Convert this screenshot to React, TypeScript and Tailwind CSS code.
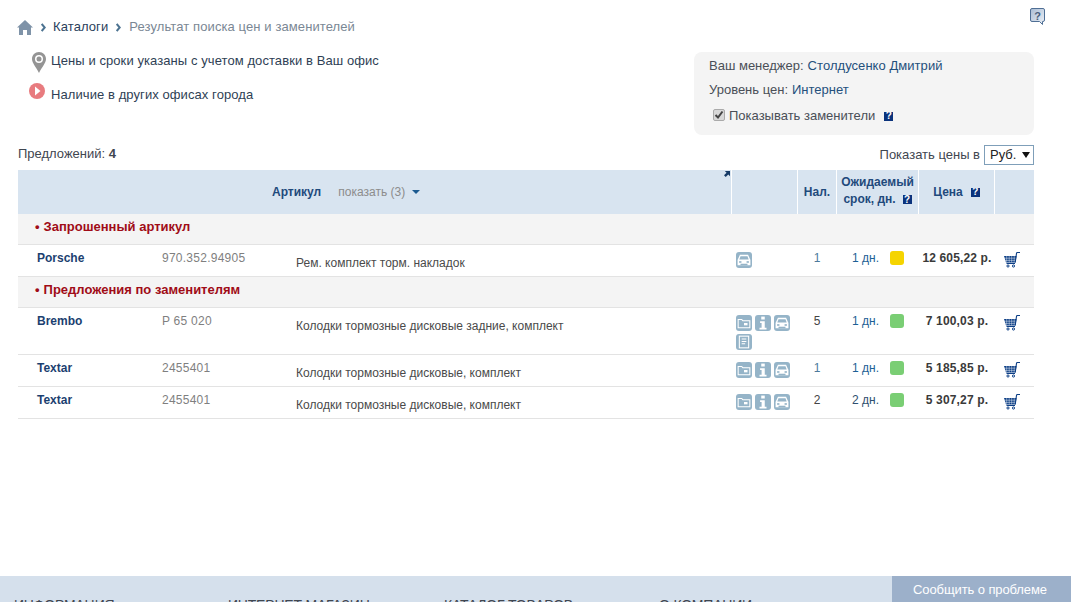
import React from 'react';

const rowCols = 'grid grid-cols-[144px_134px_436px_66px_38px_83px_75px_40px]';

const HelpBadge = () => (
  <span className="inline-flex h-[9px] w-[9px] items-center justify-center overflow-hidden bg-[#0b337c] text-[10px] leading-none font-bold text-white">?</span>
);

const HomeIcon = () => (
  <svg width="16" height="15" viewBox="0 0 16 15" fill="#7f93a8">
    <path d="M8 0 L16 7.5 L14 7.5 L14 15 L10 15 L10 10 L6 10 L6 15 L2 15 L2 7.5 L0 7.5 Z" />
  </svg>
);

const Chevron = () => (
  <svg width="5" height="9" viewBox="0 0 5 9" fill="none" stroke="#4d7391" strokeWidth="2">
    <path d="M.7 1 L3.7 4.5 L.7 8" />
  </svg>
);

const PinIcon = () => (
  <svg width="14" height="21" viewBox="0 0 14 21">
    <path d="M7 0 C3 0 0 3 0 7 C0 11 4 15 7 21 C10 15 14 11 14 7 C14 3 11 0 7 0 Z" fill="#949494" />
    <circle cx="7" cy="7" r="4" fill="#fff" />
    <circle cx="7" cy="7" r="2.5" fill="#949494" />
  </svg>
);

const PlayIcon = () => (
  <svg width="16" height="16" viewBox="0 0 16 16">
    <circle cx="8" cy="8" r="8" fill="#e87b7f" />
    <path d="M6 3.5 L11.5 8 L6 12.5 Z" fill="#fff" />
  </svg>
);

const QuestionBubble = () => (
  <svg width="15" height="17" viewBox="0 0 15 17">
    <defs>
      <linearGradient id="bubbleFill" x1="0" y1="0" x2="1" y2="1">
        <stop offset="0" stopColor="#a9bcd4" />
        <stop offset="1" stopColor="#eef2f7" />
      </linearGradient>
    </defs>
    <path d="M2 .5 H13 A1.5 1.5 0 0 1 14.5 2 V12 A1.5 1.5 0 0 1 13 13.5 H12.5 V16.5 L9.5 13.5 H2 A1.5 1.5 0 0 1 .5 12 V2 A1.5 1.5 0 0 1 2 .5 Z" fill="url(#bubbleFill)" stroke="#4f6f95" />
    <text x="7.5" y="11.5" fontSize="11" fontWeight="700" textAnchor="middle" fill="#4a5f7c" fontFamily="Liberation Sans">?</text>
  </svg>
);

const CartIcon = () => (
  <svg width="16" height="16" viewBox="0 0 16 16" fill="none">
    <path d="M0 4 H12.5 L11.5 10.5 H2 Z" fill="#0d3f86" />
    <path d="M0 6.2 H12 M0 8.4 H12 M2.7 4 V10.5 M5.2 4 V10.5 M7.7 4 V10.5 M10.2 4 V10.5" stroke="#fff" strokeWidth=".45" />
    <path d="M11.2 10.5 L12.5 1.5 L13 .5 H16" stroke="#0d3f86" strokeWidth="1.1" />
    <rect x="2.5" y="11" width="8.5" height="1" fill="#0d3f86" />
    <circle cx="4" cy="14" r="1.1" stroke="#0d3f86" strokeWidth="1" />
    <circle cx="9.5" cy="14" r="1.1" stroke="#0d3f86" strokeWidth="1" />
  </svg>
);

const IconTile = ({ children }: { children: React.ReactNode }) => (
  <span className="flex h-4 w-4 items-center justify-center rounded-[3px] bg-[#95b4c8]">
    <svg width="14" height="14" viewBox="0 0 12 12" fill="none">{children}</svg>
  </span>
);

const BoxTile = () => (
  <IconTile>
    <path d="M1 3 H4 L5 4 H11 V10 H1 Z" stroke="#fff" strokeWidth=".9" />
    <rect x="6" y="6" width="3" height="2" fill="#fff" />
  </IconTile>
);

const InfoTile = () => (
  <IconTile>
    <rect x="4.5" y="0.5" width="3" height="2.5" fill="#fff" />
    <path d="M3.5 4.5 H7.5 V10 H9 V11.5 H3 V10 H4.8 V6 H3.5 Z" fill="#fff" />
  </IconTile>
);

const CarTile = () => (
  <IconTile>
    <path d="M0.5 6 L2.5 1.5 H9.5 L11.5 6 V10.5 H0.5 Z" fill="#fff" />
    <path d="M3 2.8 H9 L10 5.5 H2 Z" fill="#95b4c8" />
    <rect x="1.8" y="7" width="2" height="1.4" fill="#95b4c8" />
    <rect x="8.2" y="7" width="2" height="1.4" fill="#95b4c8" />
    <rect x="3" y="9.2" width="6" height="1.3" fill="#95b4c8" />
  </IconTile>
);

const DocTile = () => (
  <IconTile>
    <rect x="2" y="1" width="8" height="10" stroke="#fff" strokeWidth=".9" />
    <path d="M4 3.5 H8 M4 5.5 H8 M4 7.5 H7" stroke="#fff" strokeWidth=".9" />
  </IconTile>
);

const SectionRow = ({ title }: { title: string }) => (
  <div className="flex h-[31px] items-start gap-[4px] border-b border-[#e3e3e3] bg-[#f4f4f4] pt-[6px] pl-[17px] text-[13px] leading-[14px] font-bold text-[#a00c17]">
    <span>•</span>
    <span>{title}</span>
  </div>
);

type Offer = {
  brand: string;
  code: string;
  name: string;
  icons: React.ReactNode;
  qty: string;
  qtyClass: string;
  days: string;
  daysClass: string;
  dot: string;
  price: string;
  tall?: boolean;
};

const OfferRow = ({ offer }: { offer: Offer }) => (
  <div className={`${rowCols} border-b border-[#e3e3e3] text-[12px] leading-[14px] ${offer.tall ? 'h-[47px]' : 'h-[32px]'}`}>
    <div className="pt-[6px] pl-[19px] font-bold text-[#1c3f70]">{offer.brand}</div>
    <div className="pt-[6px] tracking-[0.25px] text-[#7f7f7f]">{offer.code}</div>
    <div className="pt-[11px] text-[#4a4a4a]">{offer.name}</div>
    <div className="flex flex-wrap content-start gap-x-[3px] gap-y-[3px] pt-[7px] pl-[4px]">{offer.icons}</div>
    <div className={`pt-[6px] text-center ${offer.qtyClass}`}>{offer.qty}</div>
    <div className={`flex items-start justify-end gap-[11px] pt-[6px] pr-[15px] ${offer.daysClass}`}>
      {offer.days}
      <span className={`h-[14px] w-[14px] rounded-[3px] ${offer.dot}`} />
    </div>
    <div className="pt-[6px] pl-[1px] text-center font-bold tracking-[0.15px] text-[#3a3a3a]">{offer.price}</div>
    <div className="pt-[7px] pl-[10px]"><CartIcon /></div>
  </div>
);

const threeIcons = (
  <>
    <BoxTile />
    <InfoTile />
    <CarTile />
  </>
);

export default function App() {
  return (
    <div className="flex h-[602px] flex-col overflow-hidden bg-white font-['Liberation_Sans',Arial,sans-serif] text-[#3c4a5a]">
      <main className="flex-1 pl-[18px]">
        <div className="flex h-[52px] w-[1027px] items-start justify-between">
          <div className="-ml-[1px] flex items-center pt-[19px] text-[13px] leading-[16px] tracking-[0.1px]">
            <HomeIcon />
            <span className="mr-[7px] ml-[8px] flex"><Chevron /></span>
            <span className="text-[#2a3f5c]">Каталоги</span>
            <span className="mr-[8px] ml-[8px] flex"><Chevron /></span>
            <span className="text-[#7a8794]">Результат поиска цен и заменителей</span>
          </div>
          <div className="pt-[8px]"><QuestionBubble /></div>
        </div>

        <div className="flex h-[83px] w-[1016px] justify-between">
          <div className="pl-[14px] text-[13px] leading-[16px] tracking-[0.08px] text-[#2f3f55]">
            <div className="flex items-start gap-[5px]">
              <PinIcon />
              <span className="mt-[1px]">Цены и сроки указаны с учетом доставки в Ваш офис</span>
            </div>
            <div className="-ml-[3px] mt-[10px] flex items-start gap-[6px]">
              <PlayIcon />
              <span className="mt-[4px]">Наличие в других офисах города</span>
            </div>
          </div>
          <div className="w-[340px] rounded-lg bg-[#f4f4f4] pt-[6px] pl-[15px] text-[13px] leading-[16px] text-[#4a4f57]">
            <div className="flex gap-[4px]">
              <span>Ваш менеджер:</span>
              <span className="tracking-[0.05px] text-[#24507c]">Столдусенко Дмитрий</span>
            </div>
            <div className="mt-[8px] flex gap-[4px]">
              <span>Уровень цен:</span>
              <span className="text-[#24507c]">Интернет</span>
            </div>
            <div className="mt-[10px] flex items-center pl-[4px]">
              <span className="-mt-[2px] flex h-[12px] w-[12px] items-center justify-center rounded-[2px] border border-[#aaa] bg-[#d8d8d8]">
                <svg width="10" height="10" viewBox="0 0 10 10" fill="none" stroke="#444" strokeWidth="2"><path d="M1.5 5 L4 7.5 L8.5 1.5" /></svg>
              </span>
              <span className="ml-[4px]">Показывать заменители</span>
              <span className="ml-[9px] flex"><HelpBadge /></span>
            </div>
          </div>
        </div>

        <div className="flex h-[35px] w-[1016px] items-start justify-between pt-[10px] text-[13px] leading-[16px] text-[#3f4650]">
          <div className="pt-[1px]">Предложений: <b>4</b></div>
          <div className="flex items-center gap-[4px]">
            <span>Показать цены в</span>
            <div className="flex h-[20px] w-[50px] items-center justify-between border border-[#7f9fb9] pr-[3px] pl-[5px] text-[#222]">
              <span>Руб.</span>
              <span className="h-0 w-0 border-x-[4px] border-t-[6px] border-x-transparent border-t-[#111]" />
            </div>
          </div>
        </div>

        <div className="w-[1016px]">
          <div className="flex h-[44px] bg-[#d8e4f0] text-[12px] leading-[17px] font-bold text-[#1f4a7c]">
            <div className="relative flex w-[713px] items-center pl-[254px]">
              Артикул
              <span className="ml-[17px] font-normal text-[#8c8c8c]">показать (3)</span>
              <span className="ml-[7px] h-0 w-0 border-x-[4px] border-t-[4px] border-x-transparent border-t-[#1b5a90]" />
              <svg className="absolute top-[1px] right-[1px]" width="6" height="6" viewBox="0 0 7 7" fill="#163a66">
                <path d="M1 0 H7 V6 L5 4 L2 7 L0 5 L3 2 Z" />
              </svg>
            </div>
            <div className="w-[66px] border-l border-white" />
            <div className="flex w-[39px] items-center justify-center border-l border-white">Нал.</div>
            <div className="w-[82px] border-l border-white pt-[4px] text-center">
              <div>Ожидаемый</div>
              <div className="flex items-center justify-center gap-[7px]">срок, дн. <HelpBadge /></div>
            </div>
            <div className="flex w-[76px] items-center justify-center gap-[8px] border-l border-white">Цена <HelpBadge /></div>
            <div className="flex-1 border-l border-white" />
          </div>

          <SectionRow title="Запрошенный артикул" />
          <OfferRow offer={{ brand: 'Porsche', code: '970.352.94905', name: 'Рем. комплект торм. накладок', icons: <CarTile />, qty: '1', qtyClass: 'text-[#4c7a9c]', days: '1 дн.', daysClass: 'text-[#1d5f96]', dot: 'bg-[#f5d400]', price: '12 605,22 р.' }} />
          <SectionRow title="Предложения по заменителям" />
          <OfferRow offer={{ brand: 'Brembo', code: 'P 65 020', name: 'Колодки тормозные дисковые задние, комплект', icons: <>{threeIcons}<DocTile /></>, qty: '5', qtyClass: 'text-[#444]', days: '1 дн.', daysClass: 'text-[#1d5f96]', dot: 'bg-[#7ace74]', price: '7 100,03 р.', tall: true }} />
          <OfferRow offer={{ brand: 'Textar', code: '2455401', name: 'Колодки тормозные дисковые, комплект', icons: threeIcons, qty: '1', qtyClass: 'text-[#4c7a9c]', days: '1 дн.', daysClass: 'text-[#1d5f96]', dot: 'bg-[#7ace74]', price: '5 185,85 р.' }} />
          <OfferRow offer={{ brand: 'Textar', code: '2455401', name: 'Колодки тормозные дисковые, комплект', icons: threeIcons, qty: '2', qtyClass: 'text-[#444]', days: '2 дн.', daysClass: 'text-[#2f4f70]', dot: 'bg-[#7ace74]', price: '5 307,27 р.' }} />
        </div>
      </main>

      <footer className="flex h-[26px] shrink-0 overflow-hidden bg-[#d5e0ec]">
        <div className="flex flex-1 pt-[21px] pl-[14px] text-[14px] leading-[16px] tracking-[-0.2px] text-[#3f4650]">
          <span className="w-[214px]">ИНФОРМАЦИЯ</span>
          <span className="w-[216px]">ИНТЕРНЕТ МАГАЗИН</span>
          <span className="w-[215px]">КАТАЛОГ ТОВАРОВ</span>
          <span>О КОМПАНИИ</span>
        </div>
        <div className="flex w-[179px] items-center justify-center bg-[#9cb0ca] pt-[1px] pr-[3px] text-[13px] tracking-[-0.1px] text-white">Сообщить о проблеме</div>
      </footer>
    </div>
  );
}
